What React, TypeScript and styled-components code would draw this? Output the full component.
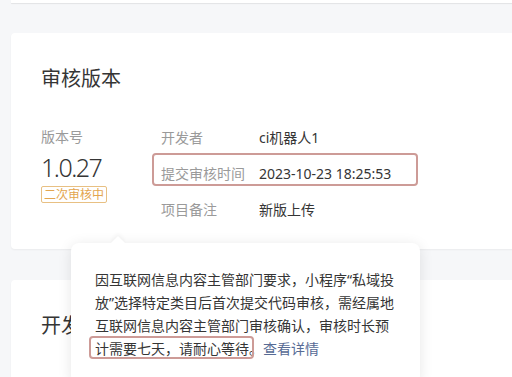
import React from 'react';
import styled, { createGlobalStyle } from 'styled-components';

const GlobalStyle = createGlobalStyle`
  body {
    margin: 0;
    background: #f6f7f9;
    overflow: hidden;
    font-family: 'Noto Sans', 'Noto Sans CJK SC', sans-serif;
    color: #353535;
  }
`;

const details = [
  { label: '开发者', value: 'ci机器人1' },
  { label: '提交审核时间', value: '2023-10-23 18:25:53', marked: true },
  { label: '项目备注', value: '新版上传' },
];

const App = () => {
  return (
    <Page>
      <GlobalStyle />
      <TopCard />
      <Card>
        <Title>审核版本</Title>
        <Info>
          <VersionCol>
            <VersionLabel>版本号</VersionLabel>
            <VersionNumber>1.0.27</VersionNumber>
            <Badge>二次审核中</Badge>
          </VersionCol>
          <Details>
            {details.map((item) => (
              <DetailRow key={item.label} $marked={item.marked}>
                <DetailLabel>{item.label}</DetailLabel>
                <DetailValue>{item.value}</DetailValue>
              </DetailRow>
            ))}
          </Details>
        </Info>
      </Card>
      <Card $tall>
        <Title>开发版本</Title>
      </Card>
      <Popover>
        <PopText>
          因互联网信息内容主管部门要求，小程序“私域投放”选择特定类目后首次提交代码审核，需经属地互联网信息内容主管部门审核确认，审核时长预
          <Marked>计需要七天，请耐心等待。</Marked>
          <Link href="#">查看详情</Link>
        </PopText>
      </Popover>
    </Page>
  );
};

export default App;

const Page = styled.div`
  position: relative;
  width: 620px;
  padding-left: 11px;
`;

const TopCard = styled.div`
  height: 3px;
  background: #fff;
  box-shadow: 0 1px 1px rgba(0, 0, 0, 0.08);
  margin-bottom: 30px;
`;

const Card = styled.div<{ $tall?: boolean }>`
  background: #fff;
  border-radius: 4px;
  padding: 32px 30px 22px;
  margin-bottom: 31px;
  box-shadow: 0 1px 2px rgba(0, 0, 0, 0.05);
  min-height: ${(p) => (p.$tall ? '200px' : 'auto')};
`;

const Title = styled.h2`
  margin: 0 0 26px;
  font-size: 20px;
  line-height: 28px;
  font-weight: 400;
  color: #353535;
`;

const Info = styled.div`
  display: flex;
`;

const VersionCol = styled.div`
  width: 120px;
  display: flex;
  flex-direction: column;
  align-items: flex-start;
`;

const VersionLabel = styled.div`
  font-size: 14px;
  line-height: 36px;
  color: #9a9a9a;
`;

const VersionNumber = styled.div`
  font-size: 25px;
  line-height: 25px;
  font-weight: 300;
  letter-spacing: -1.5px;
  color: #353535;
`;

const Badge = styled.span`
  margin-top: 6px;
  height: 17px;
  box-sizing: border-box;
  padding: 0 2px;
  border: 1px solid #e8c083;
  border-radius: 2px;
  font-size: 12px;
  line-height: 15px;
  color: #e3a54f;
`;

const Details = styled.div`
  display: flex;
  flex-direction: column;
`;

const DetailRow = styled.div<{ $marked?: boolean }>`
  position: relative;
  display: flex;
  align-items: center;
  height: 36px;
  font-size: 14px;

  &::before {
    content: '';
    display: ${(p) => (p.$marked ? 'block' : 'none')};
    position: absolute;
    left: -9px;
    top: -2px;
    width: 266px;
    height: 33px;
    box-sizing: border-box;
    border: 2px solid #cd9b97;
    border-radius: 4px;
  }
`;

const DetailLabel = styled.span`
  width: 98px;
  color: #9a9a9a;
`;

const DetailValue = styled.span`
  color: #353535;
`;

const Popover = styled.div`
  position: absolute;
  left: 71px;
  top: 243px;
  width: 349px;
  box-sizing: border-box;
  padding: 25px 24px 24px;
  background: #fff;
  border-radius: 8px;
  box-shadow: 0 2px 14px rgba(0, 0, 0, 0.1);

  &::before {
    content: '';
    position: absolute;
    left: 42px;
    top: -5px;
    width: 10px;
    height: 10px;
    background: #fff;
    transform: rotate(45deg);
    box-shadow: -2px -2px 4px rgba(0, 0, 0, 0.04);
  }
`;

const PopText = styled.p`
  position: relative;
  margin: 0;
  font-size: 14px;
  line-height: 23px;
  color: #353535;
`;

const Marked = styled.span`
  position: relative;

  &::after {
    content: '';
    position: absolute;
    left: -6px;
    right: 9px;
    top: -3px;
    bottom: -1px;
    border: 2px solid #cd9b97;
    border-radius: 4px;
  }
`;

const Link = styled.a`
  color: #576b95;
  text-decoration: none;
`;
